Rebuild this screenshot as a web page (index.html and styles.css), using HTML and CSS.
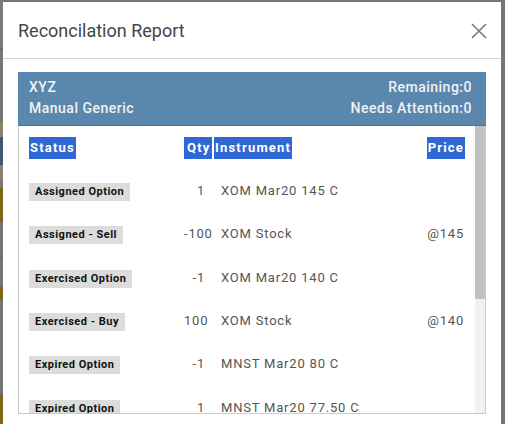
FILE: index.html
```html
<!DOCTYPE html>
<html lang="en">
<head>
  <meta charset="UTF-8">
  <meta name="viewport" content="width=device-width, initial-scale=1.0">
  <title>Reconcilation Report</title>
  <link rel="stylesheet" href="styles.css">
</head>

<body>
  <div class="modal">
    <div class="modal-header">
      <span class="modal-title">Reconcilation Report</span>
      <span class="close" title="Close">
        <svg width="16" height="16" viewBox="0 0 16 16">
          <path d="M1 1 L15 15 M15 1 L1 15" stroke="#7a7a7a" stroke-width="1.6" fill="none" />
        </svg>
      </span>
    </div>

    <div class="modal-body">
      <div class="panel">
        <div class="panel-head">
          <div class="line">
            <span>XYZ</span>
            <span>Remaining:0</span>
          </div>
          <div class="line">
            <span>Manual Generic</span>
            <span>Needs Attention:0</span>
          </div>
        </div>

        <div class="panel-body">
          <div class="list">
            <div class="grid head">
              <div><span class="th">Status</span></div>
              <div class="qty"><span class="th">Qty</span></div>
              <div><span class="th">Instrument</span></div>
              <div class="price"><span class="th">Price</span></div>
            </div>

            <div class="grid row">
              <div><span class="badge">Assigned Option</span></div>
              <div class="qty val">1</div>
              <div class="inst val">XOM Mar20 145 C</div>
              <div class="price val"></div>
            </div>
            <div class="grid row">
              <div><span class="badge">Assigned - Sell</span></div>
              <div class="qty val">-100</div>
              <div class="inst val">XOM Stock</div>
              <div class="price val">@145</div>
            </div>
            <div class="grid row">
              <div><span class="badge">Exercised Option</span></div>
              <div class="qty val">-1</div>
              <div class="inst val">XOM Mar20 140 C</div>
              <div class="price val"></div>
            </div>
            <div class="grid row">
              <div><span class="badge">Exercised - Buy</span></div>
              <div class="qty val">100</div>
              <div class="inst val">XOM Stock</div>
              <div class="price val">@140</div>
            </div>
            <div class="grid row">
              <div><span class="badge">Expired Option</span></div>
              <div class="qty val">-1</div>
              <div class="inst val">MNST Mar20 80 C</div>
              <div class="price val"></div>
            </div>
            <div class="grid row">
              <div><span class="badge">Expired Option</span></div>
              <div class="qty val">1</div>
              <div class="inst val">MNST Mar20 77.50 C</div>
              <div class="price val"></div>
            </div>
          </div>

          <!-- list scrollbar, thumb at the top -->
          <div class="scrollbar">
            <div class="thumb"></div>
          </div>
        </div>
      </div>
    </div>
  </div>
</body>

</html>
```

FILE: styles.css
```css
html, body {
  margin: 0;
  height: 100%;
  overflow: hidden;
}

/* dimmed page behind the dialog */
body {
  font-family: Roboto, "Liberation Sans", sans-serif;
  background-color: #767676;
  background-image: linear-gradient(to bottom,
    #7b7b7b 0, #7b7b7b 48px, #666 48px, #666 49px, #777 49px,
    #777 122px, #8a8466 122px, #8a8466 137px, #3d5870 137px, #3d5870 165px,
    #8a8466 165px, #8a8466 180px, #777 180px, #777 188px,
    #7f6614 188px, #7f6614 222px, #747474 222px, #747474 256px,
    #666 256px, #666 257px, #747474 257px, #747474 287px,
    #7f6614 287px, #7f6614 300px, #747474 300px, #747474 395px,
    #7f6614 395px);
  background-size: 3px 100%;
  background-repeat: no-repeat;
}

.modal {
  margin: 2px 0 0 3px;
  width: 498px;
  height: 440px;
  background: #fff;
}

.modal-header {
  display: flex;
  justify-content: space-between;
  align-items: center;
  height: 56px;
  padding: 0 15px;
  border-bottom: 1px solid #d2d2d2;
}

.modal-title {
  font-size: 18px;
  color: #454545;
  padding-top: 1px;
}

.close {
  display: flex;
  margin-right: -1px;
  margin-top: 1px;
  cursor: pointer;
}

.modal-body {
  padding: 13px 15px 0 15px;
}

.panel-head {
  background: #5a87ae;
  color: #f2f2f2;
  font-size: 14px;
  font-weight: 500;
  letter-spacing: 0.5px;
  padding: 5px 14px 6px 11px;
  border-bottom: 1px solid #4d7599;
  height: 42px;
}

.line {
  display: flex;
  justify-content: space-between;
  line-height: 21px;
}

.panel-body {
  display: flex;
  height: 287px;
  border: 1px solid #ccc;
  border-top: none;
}

.list {
  flex: 1;
  overflow: hidden;
  padding: 0 10px 0 10px;
}

.scrollbar {
  width: 10px;
  background: #f1f1f1;
}

.thumb {
  height: 173px;
  background: #c1c1c1;
}

.grid {
  display: grid;
  grid-template-columns: 152px 27px 1fr 80px;
  column-gap: 3px;
}

.head {
  margin-top: 11px;
  margin-bottom: 10px;
  height: 22px;
}

.th {
  display: inline-block;
  background: #2f68d5;
  color: #fff;
  font-size: 13px;
  font-weight: 700;
  line-height: 22px;
  letter-spacing: 1.2px;
  padding: 0 1px;
}

.qty .th {
  padding-left: 3px;
}

.qty, .price {
  text-align: right;
}

.row {
  height: 43.3px;
  align-items: center;
}

.badge {
  display: inline-block;
  background: #dcdcdc;
  color: #111;
  font-size: 11px;
  font-weight: 700;
  letter-spacing: 0.5px;
  height: 18px;
  line-height: 18px;
  padding: 0 6px;
}

.val {
  font-size: 13px;
  color: #555;
  letter-spacing: 0.8px;
  white-space: nowrap;
}

.qty.val {
  padding-right: 6px;
}

.inst.val {
  padding-left: 7px;
}

.price.val {
  padding-right: 1px;
}
```
